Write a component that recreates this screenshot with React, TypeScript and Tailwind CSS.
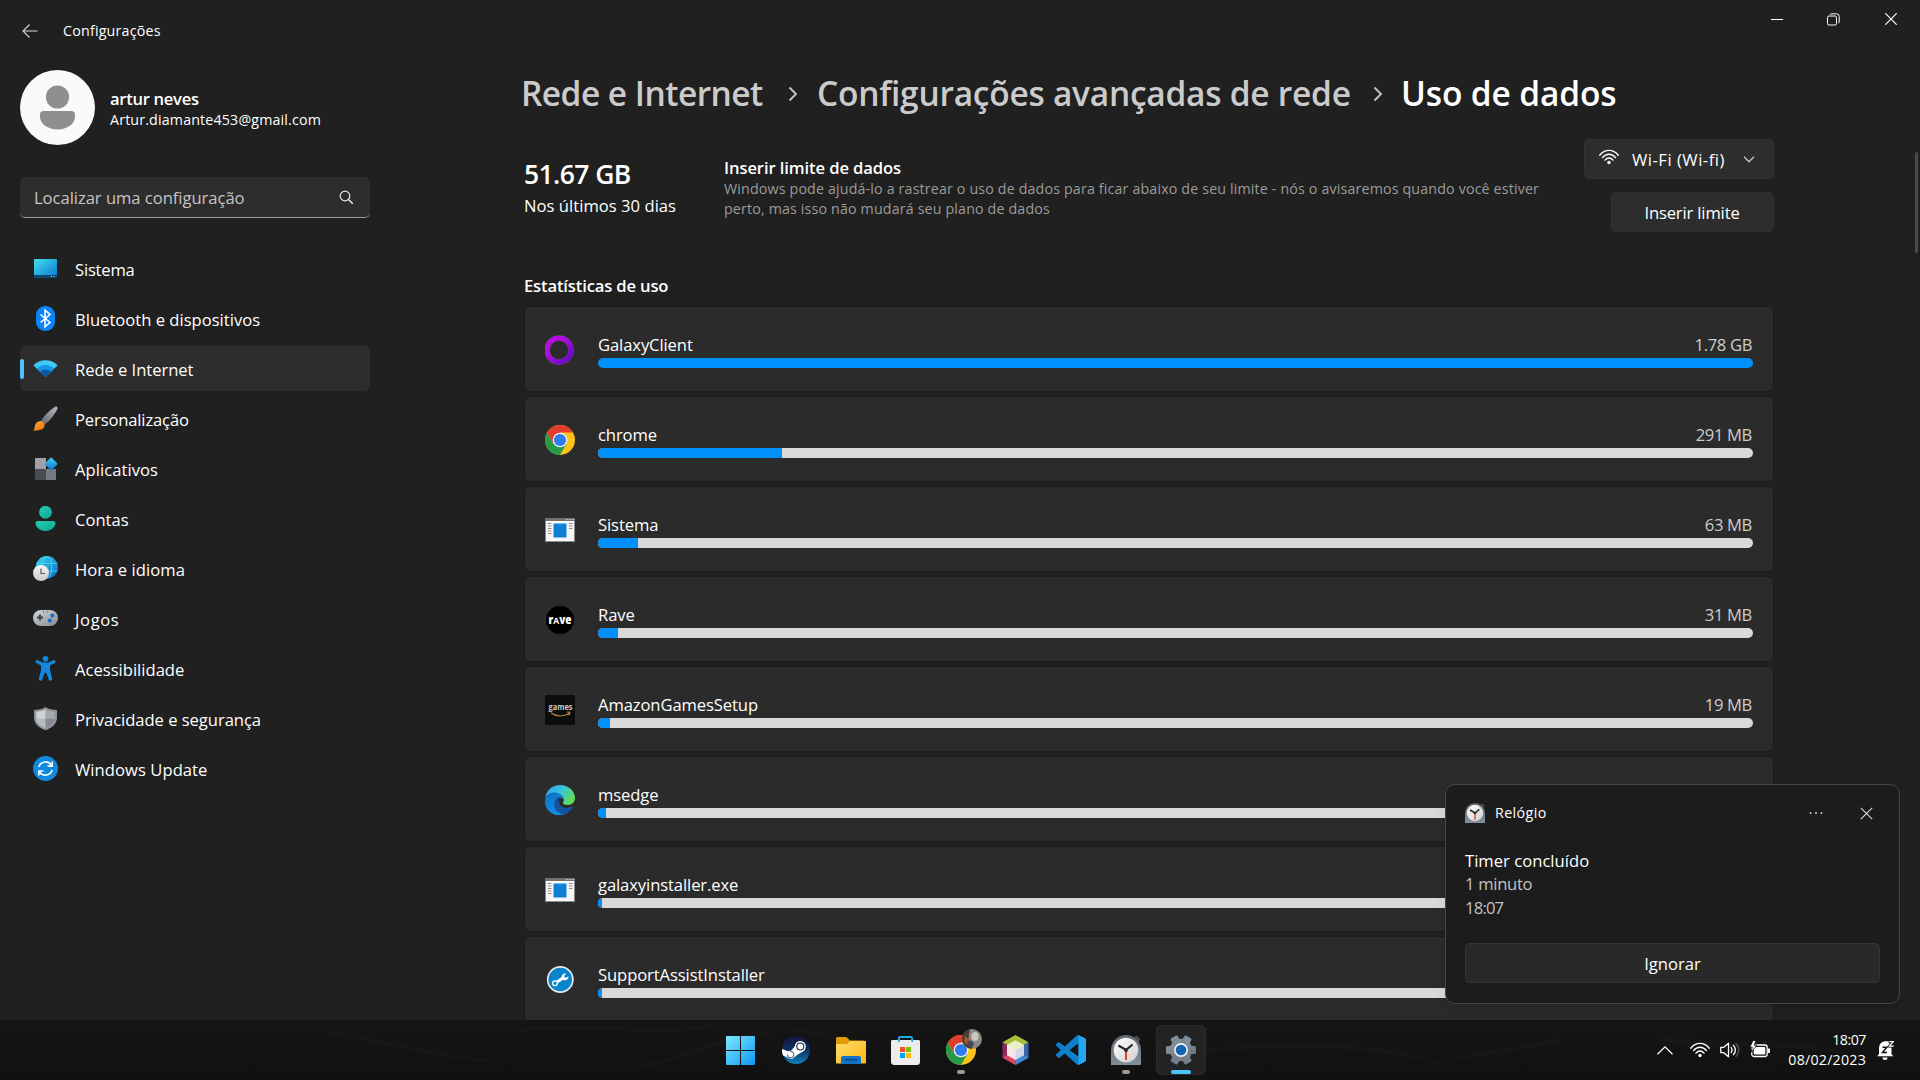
import type { ReactNode } from "react";

function MonitorIcon() {
  return (
    <svg width="25" height="25" viewBox="0 0 25 25">
      <defs>
        <linearGradient id="mon" x1="0" y1="0" x2="1" y2="1">
          <stop offset="0" stopColor="#3fe0ec" />
          <stop offset="1" stopColor="#0d76cf" />
        </linearGradient>
      </defs>
      <rect x="1" y="3" width="23" height="19" rx="1" fill="url(#mon)" />
      <path d="M1 19h23v2a1 1 0 0 1-1 1H2a1 1 0 0 1-1-1z" fill="#0b4a6e" />
      <path d="M18 20h1v1h-1zM20.500 20h1v1h-1z" fill="#9fe6f5" />
    </svg>
  );
}

function BluetoothIcon() {
  return (
    <svg width="25" height="25" viewBox="0 0 25 25">
      <rect x="3" y="0" width="19" height="25" rx="9" fill="#0a84fa" />
      <path d="M7.500 8.500l9.500 8-5 4.200V4.300l5 4.200-9.500 8" fill="none" stroke="#fff" strokeWidth="1.600" />
    </svg>
  );
}

function WifiColorIcon() {
  return (
    <svg width="25" height="25" viewBox="0 0 25 25">
      <path d="M.3 9.300A17.500 17.500 0 0 1 24.700 9.300L12.500 21z" fill="#3ccbf4" />
      <path d="M3.700 12.600a12.700 12.700 0 0 1 17.600 0L12.500 21z" fill="#1796e6" />
      <path d="M7 15.800a8 8 0 0 1 11 0L12.500 21z" fill="#0d57a8" />
    </svg>
  );
}

function BrushIcon() {
  return (
    <svg width="25" height="25" viewBox="0 0 25 25">
      <defs>
        <linearGradient id="bh" x1="1" y1="0" x2="0" y2="1">
          <stop offset="0" stopColor="#b5b9be" />
          <stop offset="1" stopColor="#5f656d" />
        </linearGradient>
        <linearGradient id="bt" x1="0" y1="0" x2="1" y2="1">
          <stop offset="0" stopColor="#ffb936" />
          <stop offset="1" stopColor="#f0630f" />
        </linearGradient>
      </defs>
      <path d="M22 .8c1.600-1 3.300.5 2.400 2.200-2.800 5.500-6.600 11-12.200 15.200l-4-3.800C12.300 8.800 16.500 4.200 22 .8z" fill="url(#bh)" />
      <path d="M6.200 15.200c2.900-1.200 6.200 1.700 5.300 5-.8 3.200-4.500 4.500-11.500 4.300 2.300-1.500 1.400-4.200 2.700-6.500.8-1.400 2-2.300 3.500-2.800z" fill="url(#bt)" />
    </svg>
  );
}

function AppsIcon() {
  return (
    <svg width="25" height="25" viewBox="0 0 25 25">
      <defs>
        <linearGradient id="ap" x1="0" y1="0" x2="1" y2="1">
          <stop offset="0" stopColor="#3fd0f8" />
          <stop offset="1" stopColor="#0a72d4" />
        </linearGradient>
      </defs>
      <path d="M3 2h10v11H2V3a1 1 0 0 1 1-1z" fill="#9da2a8" />
      <path d="M2 13h11v11H3a1 1 0 0 1-1-1z" fill="#484b4f" />
      <path d="M13 13h10v10a1 1 0 0 1-1 1h-9z" fill="#767b82" />
      <rect x="13.400" y="3.200" width="9.400" height="9.400" rx=".8" transform="rotate(45 18.100 7.900)" fill="url(#ap)" />
    </svg>
  );
}

function AccountIcon() {
  return (
    <svg width="25" height="25" viewBox="0 0 25 25">
      <defs>
        <linearGradient id="ac" x1="0" y1="0" x2="1" y2="1">
          <stop offset="0" stopColor="#22d0b0" />
          <stop offset="1" stopColor="#12a593" />
        </linearGradient>
      </defs>
      <circle cx="12.500" cy="6.300" r="6.400" fill="url(#ac)" />
      <path d="M4.700 15h15.600c1.200 0 2.200 1 2.200 2.100 0 4-4.200 7.900-10 7.900s-10-3.900-10-7.900c0-1.100 1-2.100 2.200-2.100z" fill="url(#ac)" />
    </svg>
  );
}

function TimeIcon() {
  return (
    <svg width="25" height="25" viewBox="0 0 25 25">
      <defs>
        <linearGradient id="gl" x1="0" y1="0" x2="1" y2="1">
          <stop offset="0" stopColor="#38dbe8" />
          <stop offset="1" stopColor="#0c68cc" />
        </linearGradient>
        <linearGradient id="gc" x1="0" y1="0" x2="0" y2="1">
          <stop offset="0" stopColor="#f6f6f6" />
          <stop offset="1" stopColor="#c9c9c9" />
        </linearGradient>
      </defs>
      <circle cx="13.800" cy="11.300" r="11.200" fill="url(#gl)" />
      <g fill="none" stroke="#4fe0f2" strokeOpacity=".7">
        <ellipse cx="13.800" cy="11.300" rx="5" ry="11" />
        <path d="M3.500 7.500h20.800M3.500 15h20.800" />
      </g>
      <circle cx="8" cy="17" r="8" fill="url(#gc)" />
      <path d="M8 12.500V17.500h4" fill="none" stroke="#55595e" strokeWidth="1.200" />
    </svg>
  );
}

function GameIcon() {
  return (
    <svg width="25" height="25" viewBox="0 0 25 25">
      <defs>
        <linearGradient id="gm" x1="0" y1="0" x2="0.800" y2="1">
          <stop offset="0" stopColor="#d3d7da" />
          <stop offset="1" stopColor="#8b9197" />
        </linearGradient>
      </defs>
      <rect y="4" width="25" height="16" rx="8" fill="url(#gm)" />
      <path d="M7 8.500v6M4 11.500h6" stroke="#3d4146" strokeWidth="1.800" />
      <circle cx="19.300" cy="9.500" r="2" fill="#0f6fd0" />
      <circle cx="16.800" cy="14.500" r="2" fill="#0f6fd0" />
      <path d="M10 5.200h1v1h-1zM14 5.200h1v1h-1z" fill="#444" />
    </svg>
  );
}

function AccessIcon() {
  return (
    <svg width="25" height="25" viewBox="0 0 25 25">
      <g fill="#1289dd">
        <circle cx="12.500" cy="2.800" r="2.800" />
        <path d="M4.600 4.200l5.400 2.300h5l5.400-2.300c2-.7 3 2 1.200 2.900L17 9.500v4.700l2.200 8.500c.4 2.100-2.600 3-3.400 1l-2.600-7h-1.400l-2.600 7c-.8 2-3.800 1.100-3.400-1L8 14.200V9.500L3.400 7.100c-1.800-.9-.8-3.600 1.200-2.900z" />
      </g>
    </svg>
  );
}

function ShieldIcon() {
  return (
    <svg width="25" height="25" viewBox="0 0 25 25">
      <path d="M12.500 1c3.500 2.300 7.200 2.900 11.500 3v7.500c0 6-4.500 10.200-11.500 12.700C5.500 21.700 1 17.500 1 11.500V4c4.300-.1 8-.7 11.500-3z" fill="#8f949a" />
      <path d="M12.500 3.300c2.900 1.600 5.900 2.300 9.300 2.500v5.700c0 4.800-3.300 8.200-9.300 10.500z" fill="#a4a9ae" />
      <path d="M12.500 3.300C9.600 4.900 6.600 5.600 3.200 5.800v5.700c0 4.800 3.300 8.200 9.300 10.500z" fill="#ced1d5" />
      <path d="M3.200 12.500h9.300V22c-6-2.300-9.100-5.200-9.300-9.500z" fill="#b7bbc0" />
      <path d="M12.500 12.500h9.300c-.2 4.300-3.300 7.200-9.300 9.500z" fill="#868b91" />
    </svg>
  );
}

function UpdateIcon() {
  return (
    <svg width="25" height="25" viewBox="0 0 25 25">
      <circle cx="12.500" cy="12.500" r="12.500" fill="#1189de" />
      <g fill="none" stroke="#fff" strokeWidth="1.600">
        <path d="M5.800 11A7 7 0 0 1 18.500 9.300M19.200 14A7 7 0 0 1 6.500 15.800" />
        <path d="M19.200 5.500v4.600h-4.600M5.800 19.500V15h4.600" />
      </g>
    </svg>
  );
}

function WifiIcon() {
  return (
    <svg width="20" height="16" viewBox="0 0 20 16" fill="none" stroke="#fff" strokeWidth="1.400" strokeLinecap="round">
      <path d="M.8 6.200C5.800-.2 14.200-.2 19.200 6.200" />
      <path d="M3.500 8.600c3.700-4.400 9.300-4.400 13 0" />
      <path d="M6 11.100c2.400-2.800 5.600-2.800 8 0" />
      <circle cx="10" cy="13.500" r="1.700" fill="#fff" stroke="none" />
    </svg>
  );
}

function GalaxyIcon() {
  return (
    <svg width="30" height="30" viewBox="0 0 30 30">
      <defs>
        <linearGradient id="gx" x1="0" y1="0" x2="1" y2="1">
          <stop offset="0" stopColor="#c808e0" />
          <stop offset=".35" stopColor="#b00ce6" />
          <stop offset="1" stopColor="#5c06c8" />
        </linearGradient>
      </defs>
      <circle cx="14" cy="15" r="12" fill="none" stroke="#7a3a8c" strokeWidth="5.500" />
      <circle cx="14" cy="15" r="12" fill="none" stroke="url(#gx)" strokeWidth="4.500" />
    </svg>
  );
}

function ChromeIcon() {
  return (
    <svg width="30" height="30" viewBox="-15 -15 30 30">
      <circle r="15" fill="#fcc31a" />
      <path d="M-13-7.500A15 15 0 0 0 0 15L6.500 3.750H-6.500z" fill="#279a48" />
      <path d="M-13-7.500A15 15 0 0 1 13-7.500H0L-6.500 3.750z" fill="#e33b2e" />
      <circle r="7.300" fill="#eef1f6" />
      <circle r="6.100" fill="#2f7cf0" />
    </svg>
  );
}

function ExeIcon() {
  return (
    <svg width="30" height="30" viewBox="0 0 30 30">
      <rect x=".5" y="3.500" width="29" height="23" fill="#f7f7f7" stroke="#8a8a88" />
      <path d="M0 3h30v3H0z" fill="#73716f" />
      <path d="M21 4.500h1.500M24 4.500h1.500M27 4.500h1.500" stroke="#d8d8d8" />
      <rect x="8.500" y="8.500" width="13" height="14" fill="#0f80d2" />
      <path d="M3 8.500h3.500M3 11h3.500M3 13.500h3.500M3 16h3.500M3 18.500h3.500M24 8.500h3.500M24 11h3.500M24 13.500h3.500" stroke="#8d8d8d" />
    </svg>
  );
}

function RaveIcon() {
  return (
    <svg width="30" height="30" viewBox="0 0 30 30">
      <circle cx="15" cy="15" r="14" fill="#000" />
      <text x="15" y="18.600" textAnchor="middle" textLength="23" lengthAdjust="spacingAndGlyphs" fontFamily="Open Sans, sans-serif" fontWeight="800" fontSize="11.500" fill="#fff">rᴀve</text>
    </svg>
  );
}

function AmazonIcon() {
  return (
    <svg width="30" height="30" viewBox="0 0 30 30">
      <rect width="30" height="30" rx="1.500" fill="#0b0d0d" />
      <text x="15.500" y="14.800" textAnchor="middle" textLength="24" lengthAdjust="spacingAndGlyphs" fontFamily="Open Sans, sans-serif" fontWeight="700" fontSize="9" fill="#c9c9c9">games</text>
      <path d="M6 17.800c5 4 12.500 4.200 18 .8M22 17l2.800.3-.7 2.800" fill="none" stroke="#b98b3a" strokeWidth="1.200" />
    </svg>
  );
}

function EdgeIcon() {
  return (
    <svg width="30" height="30" viewBox="0 0 30 30">
      <defs>
        <linearGradient id="e1" x1="0" y1="0.200" x2="1" y2="0.600">
          <stop offset="0" stopColor="#2fa8ee" />
          <stop offset=".5" stopColor="#35c5d8" />
          <stop offset="1" stopColor="#62dd50" />
        </linearGradient>
        <linearGradient id="e2" x1="0" y1="0" x2="0.300" y2="1">
          <stop offset="0" stopColor="#1170c4" />
          <stop offset="1" stopColor="#0c8fe6" />
        </linearGradient>
      </defs>
      <path d="M.2 13C1.300 5.200 7.400 0 15 0c8.300 0 15 6 15 12.800 0 4.200-3.200 7.200-7 7.200-3.200 0-5.200-1-5.200-2 0-.8 1-1.200 1-3.200C18.500 10.500 13 8 8.500 8 4.500 8 1.500 10 .2 13z" fill="url(#e1)" />
      <path d="M0 15C.8 10.500 4.200 7.600 8.700 7.600c5 0 9.700 2.600 10.100 7-2.500-3.400-8-2.200-8.800 2-1 5.400 3 11 8.600 13C8 32.500-.8 24.500 0 15z" fill="url(#e2)" />
      <path d="M13.500 12c-7 4-5.500 15.500 5 17.700 4-1.200 7-3.500 9.100-7 .5-.8-.2-1.300-1-.9-6.500 3-12.600-.3-12.900-5.300-.1-2 .3-3.300-.2-4.500z" fill="#1553a0" />
    </svg>
  );
}

function SupportIcon() {
  return (
    <svg width="30" height="30" viewBox="0 0 30 30">
      <circle cx="15.300" cy="14.500" r="12.600" fill="#0a84cc" stroke="#e4e8ea" strokeWidth="1.700" />
      <path d="M10.300 18.200l8.700-6" stroke="#fff" strokeWidth="3" />
      <circle cx="10" cy="18.200" r="2.400" fill="#0a84cc" stroke="#fff" strokeWidth="1.300" />
      <path d="M16.500 13c-.2-3 2-5 4.700-4.300l-2.200 2.300 1.800 2 2.700-1.700c.3 2.700-2.200 4.600-5 3.700z" fill="#fff" />
    </svg>
  );
}

function ClockIcon({ size }: { size: number }) {
  return (
    <svg width={size} height={size} viewBox="0 0 30 30">
      <defs>
        <linearGradient id={"ck" + size} x1="0" y1="0" x2="0" y2="1">
          <stop offset="0" stopColor="#5d666f" />
          <stop offset="1" stopColor="#82909c" />
        </linearGradient>
        <linearGradient id={"cf" + size} x1="0" y1="0" x2="1" y2="1">
          <stop offset="0" stopColor="#ffffff" />
          <stop offset="1" stopColor="#cfcfcf" />
        </linearGradient>
      </defs>
      <path d="M23 2.500l2.500-2.200 4 4-2 2.700z" fill="#4a4a4a" />
      <path d="M0 30V15a15 15 0 0 1 30 0v14a1 1 0 0 1-1 1z" fill={"url(#ck" + size + ")"} />
      <circle cx="15" cy="15" r="12.300" fill={"url(#cf" + size + ")"} />
      <path d="M15 15v10" stroke="#d8431a" strokeWidth="2" />
      <path d="M7.500 10.500L15 15l6.500-5.500" fill="none" stroke="#26292c" strokeWidth="2.200" />
      <circle cx="15" cy="15" r="2" fill="#26292c" />
    </svg>
  );
}

function StartIcon() {
  return (
    <svg width="29" height="29" viewBox="0 0 29 29">
      <defs>
        <linearGradient id="st" gradientUnits="userSpaceOnUse" x1="0" y1="0" x2="29" y2="29">
          <stop offset="0" stopColor="#7ceafd" />
          <stop offset="1" stopColor="#0f96f4" />
        </linearGradient>
      </defs>
      <path d="M0 1a1 1 0 0 1 1-1h13v14H0zM15 0h13a1 1 0 0 1 1 1v13H15zM0 15h14v14H1a1 1 0 0 1-1-1zM15 15h14v13a1 1 0 0 1-1 1H15z" fill="url(#st)" />
    </svg>
  );
}

function SteamIcon() {
  return (
    <svg width="28" height="28" viewBox="0 0 28 28">
      <defs>
        <linearGradient id="sm" x1="0" y1="0" x2="0" y2="1">
          <stop offset="0" stopColor="#12173c" />
          <stop offset=".5" stopColor="#0c2f63" />
          <stop offset="1" stopColor="#1283bd" />
        </linearGradient>
        <clipPath id="smc">
          <circle cx="14" cy="14" r="14" />
        </clipPath>
      </defs>
      <circle cx="14" cy="14" r="14" fill="url(#sm)" />
      <g clipPath="url(#smc)">
        <path d="M-1 12.500l9 3.500 5.500-6.500 9.500 4.500-8.500 5.500-4.500 3.500-11-4z" fill="#fff" />
        <circle cx="8.700" cy="18.700" r="3.900" fill="#fff" />
        <path d="M5.500 18.500a3.200 3.200 0 1 0 3-3" fill="none" stroke="#0f3c72" strokeWidth=".9" />
        <circle cx="18.300" cy="10.500" r="5.500" fill="#fff" />
        <circle cx="18.300" cy="10.500" r="3.500" fill="#fff" stroke="#0e2450" strokeWidth="1.100" />
      </g>
    </svg>
  );
}

function FolderIcon() {
  return (
    <svg width="30" height="27" viewBox="0 0 30 27">
      <defs>
        <linearGradient id="fo" x1="0" y1="0" x2="1" y2="1">
          <stop offset="0" stopColor="#ffdc6e" />
          <stop offset="1" stopColor="#fbb90f" />
        </linearGradient>
      </defs>
      <path d="M0 1.500C0 .7.700 0 1.500 0h8.300c.6 0 1 .3 1.500.7L14 3.500h14.500v6H0z" fill="#dd9a0b" />
      <path d="M0 7h11l3-3h15a1 1 0 0 1 1 1v20.500a1 1 0 0 1-1 1H1a1 1 0 0 1-1-1z" fill="url(#fo)" />
      <path d="M5 21a2 2 0 0 1 2-2h16a2 2 0 0 1 2 2v6H5z" fill="#1272c6" />
      <path d="M8.500 22.700h13" stroke="#0a3f7c" strokeWidth="1.200" />
    </svg>
  );
}

function StoreIcon() {
  return (
    <svg width="29" height="29" viewBox="0 0 29 29">
      <path d="M7.800 6V2.400c0-.9.500-1.400 1.400-1.400h10.600c.9 0 1.400.5 1.400 1.400V6" fill="none" stroke="#1eaef0" strokeWidth="1.800" />
      <path d="M0 5.500c0-.8.600-1.500 1.500-1.500h26c.9 0 1.500.7 1.500 1.500V26c0 1.600-1.200 3-3 3H3c-1.700 0-3-1.400-3-3z" fill="#ececec" />
      <path d="M7.800 6V3.500M21.200 6V3.500" stroke="#1eaef0" strokeWidth="1.800" />
      <path d="M9 11h5v5H9z" fill="#f25022" />
      <path d="M15 11h5v5h-5z" fill="#7fba00" />
      <path d="M9 17h5v5H9z" fill="#00a4ef" />
      <path d="M15 17h5v5h-5z" fill="#ffb900" />
    </svg>
  );
}

function NetbeansIcon() {
  return (
    <svg width="27" height="30" viewBox="0 0 27 30">
      <path d="M13.500 0L26.500 7.300 13.500 15 .5 7.300z" fill="#a9bf3c" />
      <path d="M.5 7.300L13.500 15v15L.5 22.700z" fill="#8f2a5c" />
      <path d="M.5 22.700L13.500 15v15z" fill="#dc4560" />
      <path d="M26.500 7.300L13.500 15v15l13-7.300z" fill="#3b62ac" />
      <path d="M26.500 22.700L13.500 15v15z" fill="#3f88d6" />
      <path d="M13.500 5.500L22 10.200v9.800l-8.500 4.800L5 20v-9.800z" fill="#f2f5ea" />
      <path d="M5 10.200l8.500 4.700v9.900L5 20z" fill="#f6e6e8" />
      <path d="M22 10.200l-8.500 4.700v9.900L22 20z" fill="#cfd8e4" />
      <path d="M13.500 5.500L22 10.200l-8.500 4.700L5 10.200z" fill="#e9f0c4" />
    </svg>
  );
}

function VsCodeIcon() {
  return (
    <svg width="30" height="30" viewBox="0 0 24 24">
      <path
        d="M23.150 2.587L18.210.210a1.494 1.494 0 0 0-1.705.290l-9.460 8.630-4.120-3.128a.999.999 0 0 0-1.276.057L.327 7.261A1 1 0 0 0 .326 8.740L3.899 12 .326 15.260a1 1 0 0 0 .001 1.479L1.650 17.940a.999.999 0 0 0 1.276.057l4.120-3.128 9.460 8.630a1.492 1.492 0 0 0 1.704.290l4.942-2.377A1.500 1.500 0 0 0 24 20.060V3.939a1.500 1.500 0 0 0-.850-1.352zm-5.146 14.861L10.826 12l7.178-5.448v10.896z"
        fill="#0f7fcb"
      />
      <path d="M18 .2l5.200 2.400c.5.300.8.800.8 1.400v16c0 .6-.3 1.100-.8 1.400L18 23.800z" fill="#27a5f2" />
    </svg>
  );
}

function GearIcon() {
  return (
    <svg width="30" height="30" viewBox="-15 -15 30 30">
      <defs>
        <linearGradient id="ge" gradientUnits="userSpaceOnUse" x1="-8" y1="-15" x2="8" y2="15">
          <stop offset="0" stopColor="#8d9aa4" />
          <stop offset="1" stopColor="#66717a" />
        </linearGradient>
      </defs>
      <g fill="url(#ge)">
        <circle r="11.300" />
        <rect x="-15" y="-4" width="30" height="8" rx="1.500" />
        <rect x="-15" y="-4" width="30" height="8" rx="1.500" transform="rotate(60)" />
        <rect x="-15" y="-4" width="30" height="8" rx="1.500" transform="rotate(120)" />
      </g>
      <circle r="7" fill="#f0f0f0" />
      <circle r="5.300" fill="#1263b4" />
    </svg>
  );
}

const nav: { label: string; cls: string; icon: ReactNode }[] = [
  { label: "Sistema", cls: "tracking-[-0.2px]", icon: <MonitorIcon /> },
  { label: "Bluetooth e dispositivos", cls: "tracking-[0px]", icon: <BluetoothIcon /> },
  { label: "Rede e Internet", cls: "tracking-[-0.05px]", icon: <WifiColorIcon /> },
  { label: "Personalização", cls: "tracking-[-0.15px]", icon: <BrushIcon /> },
  { label: "Aplicativos", cls: "tracking-[0.05px]", icon: <AppsIcon /> },
  { label: "Contas", cls: "tracking-[0px]", icon: <AccountIcon /> },
  { label: "Hora e idioma", cls: "tracking-[0.05px]", icon: <TimeIcon /> },
  { label: "Jogos", cls: "tracking-[0.6px]", icon: <GameIcon /> },
  { label: "Acessibilidade", cls: "tracking-[0px]", icon: <AccessIcon /> },
  { label: "Privacidade e segurança", cls: "tracking-[-0.05px]", icon: <ShieldIcon /> },
  { label: "Windows Update", cls: "tracking-[0.05px]", icon: <UpdateIcon /> },
];

const apps: { name: string; value: string; fill: number; icon: ReactNode }[] = [
  { name: "GalaxyClient", value: "1.78 GB", fill: 1155, icon: <GalaxyIcon /> },
  { name: "chrome", value: "291 MB", fill: 184, icon: <ChromeIcon /> },
  { name: "Sistema", value: "63 MB", fill: 40, icon: <ExeIcon /> },
  { name: "Rave", value: "31 MB", fill: 20, icon: <RaveIcon /> },
  { name: "AmazonGamesSetup", value: "19 MB", fill: 12, icon: <AmazonIcon /> },
  { name: "msedge", value: "13 MB", fill: 8, icon: <EdgeIcon /> },
  { name: "galaxyinstaller.exe", value: "5 MB", fill: 4, icon: <ExeIcon /> },
  { name: "SupportAssistInstaller", value: "4 MB", fill: 4, icon: <SupportIcon /> },
];

function TitleBar() {
  return (
    <header className="flex h-[62px] shrink-0 items-center">
      <svg className="ml-[22px]" width="16" height="14" viewBox="0 0 16 14" fill="none" stroke="#d8d8d8" strokeWidth="1.100">
        <path d="M7.500.5L1 7l6.500 6.500M1 7h14.500" />
      </svg>
      <h1 className="ml-[25px] text-[14.250px] leading-5 tracking-[0.200px]">Configurações</h1>
      <div className="mr-px ml-auto flex h-[38px] self-start">
        <button className="flex w-[57px] items-center justify-center">
          <svg width="12" height="12" viewBox="0 0 12 12"><path d="M0 6.500h12" stroke="#fff" /></svg>
        </button>
        <button className="flex w-[57px] items-center justify-center">
          <svg width="13" height="13" viewBox="0 0 13 13" fill="none" stroke="#fff">
            <rect x=".5" y="3" width="9" height="9" rx="1.500" />
            <path d="M3 1.500A1.500 1.500 0 0 1 4 .8h5.500a2.700 2.700 0 0 1 2.700 2.700V9a1.500 1.500 0 0 1-.8 1.200" />
          </svg>
        </button>
        <button className="flex w-[57px] items-center justify-center">
          <svg width="12" height="12" viewBox="0 0 12 12"><path d="M.3.3l11.400 11.400M11.700.3L.3 11.700" stroke="#fff" strokeWidth="1.200" /></svg>
        </button>
      </div>
    </header>
  );
}

function Sidebar() {
  return (
    <aside className="flex w-[390px] shrink-0 flex-col px-5 pt-2">
      <div className="flex items-center">
        <svg width="75" height="75" viewBox="0 0 75 75">
          <circle cx="37.500" cy="37.500" r="37.500" fill="#fafafa" />
          <circle cx="37.500" cy="27" r="11.600" fill="#8f8f8f" />
          <path d="M23.500 41h28c2 0 3.500 1.500 3.500 3.500v2C55 54 47 59.500 37.500 59.500S20 54 20 46.500v-2c0-2 1.500-3.500 3.500-3.500z" fill="#8f8f8f" />
        </svg>
        <div className="mt-[3px] ml-[15px]">
          <p className="text-[16.600px] leading-[22px] font-semibold tracking-[-0.300px]">artur neves</p>
          <p className="text-[14.250px] leading-5 tracking-[0.150px]">Artur.diamante453@gmail.com</p>
        </div>
      </div>
      <div className="mt-8 flex h-[41px] items-center justify-between rounded-[5px] border-b border-[#9a9a9a] bg-[#2d2d2d] pr-4 pl-[14px]">
        <span className="mt-[2px] text-[16.600px] leading-6 tracking-[-0.040px] text-[#c5c5c5]">Localizar uma configuração</span>
        <svg width="15" height="15" viewBox="0 0 15 15" fill="none" stroke="#e8e8e8" strokeWidth="1.200">
          <circle cx="6" cy="6" r="4.800" />
          <path d="M9.500 9.500l4.300 4.300" strokeWidth="1.500" />
        </svg>
      </div>
      <nav className="mt-7 flex flex-col gap-[5px]">
        {nav.map((n, i) => (
          <div key={n.label} className={i === 2 ? "flex h-[45px] items-center rounded-[5px] bg-[#2d2d2d]" : "flex h-[45px] items-center"}>
            <span className={i === 2 ? "h-5 w-1 rounded-full bg-[#4cc2ff]" : "w-1"} />
            <span className="ml-[9px] size-[25px]">{n.icon}</span>
            <span className={"mt-[3px] ml-[17px] text-[16.600px] leading-6 " + n.cls}>{n.label}</span>
          </div>
        ))}
      </nav>
    </aside>
  );
}

function Crumb() {
  return (
    <svg className="mt-[2px] shrink-0" width="10" height="16" viewBox="0 0 10 16" fill="none" stroke="#c4c4c4" strokeWidth="1.900">
      <path d="M1.500 1.500L8 8l-6.500 6.500" />
    </svg>
  );
}

function Content() {
  return (
    <main className="flex flex-1 flex-col pl-[131px]">
      <div className="flex h-12 items-center pt-[13px] text-[33.500px] leading-[48px] font-semibold whitespace-nowrap text-[#cbcbcb]">
        <span className="w-[267px] shrink-0 tracking-[-0.540px]">Rede e Internet</span>
        <Crumb />
        <span className="ml-[19px] w-[556px] shrink-0 tracking-[-0.260px]">Configurações avançadas de rede</span>
        <Crumb />
        <span className="ml-[18px] tracking-[-0.130px] text-white">Uso de dados</span>
      </div>
      <section className="mt-[29px] ml-[3px] flex h-[93px] w-[1250px]">
        <div className="w-[200px] shrink-0 pt-[18px]">
          <p className="text-[26.500px] leading-[34px] font-semibold tracking-[-0.600px]">51.67 GB</p>
          <p className="mt-[3px] text-[16.600px] leading-6 tracking-[0.030px]">Nos últimos 30 dias</p>
        </div>
        <div className="shrink-0 pt-[18px]">
          <p className="text-[16.600px] leading-[22px] font-semibold tracking-[-0.100px]">Inserir limite de dados</p>
          <p className="w-[840px] text-[14.250px] leading-5 tracking-[0.150px] text-[#9b9b9b]">
            Windows pode ajudá-lo a rastrear o uso de dados para ficar abaixo de seu limite - nós o avisaremos quando você estiver perto, mas isso não mudará seu plano de dados
          </p>
        </div>
        <div className="ml-auto flex flex-col items-end gap-[13px]">
          <button className="flex h-10 w-[190px] shrink-0 items-center rounded-[5px] border border-[#323232] bg-[#2d2d2d] pl-[14px]">
            <span className="-mt-1"><WifiIcon /></span>
            <span className="mt-px ml-[13px] text-[16.600px] leading-6 tracking-[0.500px] whitespace-nowrap">Wi-Fi (Wi-fi)</span>
            <svg className="ml-[18px]" width="12" height="7" viewBox="0 0 12 7" fill="none" stroke="#c9c9c9" strokeWidth="1.300">
              <path d="M1 .8l5 5 5-5" />
            </svg>
          </button>
          <button className="flex h-10 w-[163px] shrink-0 items-center justify-center rounded-[5px] border border-[#323232] bg-[#2d2d2d] pr-px pt-px text-[16.600px] leading-6 tracking-[-0.150px]">
            Inserir limite
          </button>
        </div>
      </section>
      <h2 className="mt-[42px] ml-[3px] text-[16.600px] leading-6 font-semibold tracking-[-0.150px]">Estatísticas de uso</h2>
      <ul className="mt-[8px] ml-[3px] flex flex-col gap-1">
        {apps.map((a) => (
          <li key={a.name} className="flex h-[86px] w-[1250px] shrink-0 rounded-md border border-[#1c1c1c] bg-[#2b2b2b] pr-5 pl-5">
            <span className="mt-[28px] size-[30px] shrink-0">{a.icon}</span>
            <div className="ml-[23px] flex-1 pt-[26px]">
              <div className="flex h-[25px] justify-between text-[16.600px] leading-6 tracking-[-0.100px]">
                <span>{a.name}</span>
                <span className="mr-px tracking-[-0.350px] text-[#cdcdcd]">{a.value}</span>
              </div>
              <div className="h-[10px] overflow-hidden rounded-[5px] bg-[#d9d9d9]">
                <div className="h-full bg-[#0090fb]" style={{ width: a.fill }} />
              </div>
            </div>
          </li>
        ))}
      </ul>
    </main>
  );
}

function Toast() {
  return (
    <section className="absolute top-[784px] left-[1445px] flex h-[220px] w-[455px] flex-col rounded-[10px] border border-[#464646] bg-[#1c1c1c] px-[19px] shadow-lg">
      <div className="mt-[18px] flex h-5 items-center">
        <ClockIcon size={20} />
        <span className="mt-[-1px] ml-[10px] text-[14.250px] leading-5 tracking-[0.400px]">Relógio</span>
        <svg className="ml-auto" width="14" height="4" viewBox="0 0 14 4" fill="#cfcfcf">
          <circle cx="1.500" cy="2" r="1" /><circle cx="7" cy="2" r="1" /><circle cx="12.500" cy="2" r="1" />
        </svg>
        <svg className="mr-[7px] ml-[37px]" width="13" height="13" viewBox="0 0 13 13"><path d="M.8.8l11.400 11.400M12.200.8L.8 12.200" stroke="#d5d5d5" strokeWidth="1.200" /></svg>
      </div>
      <div className="mt-[26px] text-[16.600px] leading-[23.300px] text-[#c3c3c3]">
        <p className="tracking-[0.020px] text-white">Timer concluído</p>
        <p className="tracking-[-0.300px]">1 minuto</p>
        <p className="tracking-[-0.800px]">18:07</p>
      </div>
      <button className="mt-[24px] flex h-10 items-center justify-center rounded-[5px] border border-[#363636] bg-[#292929] pt-[2px] text-[16.600px] leading-6">
        Ignorar
      </button>
    </section>
  );
}

function Slot({ children }: { children: ReactNode }) {
  return <div className="relative flex h-full w-[55px] shrink-0 items-center justify-center">{children}</div>;
}

function Taskbar() {
  return (
    <footer className="relative flex h-[60px] shrink-0 items-center bg-linear-to-b from-[#151515] to-[#111111]">
      <svg className="absolute inset-0" width="1920" height="60" viewBox="0 0 1920 60" fill="none" stroke="#fff" strokeOpacity=".014" strokeWidth="5">
        <path d="M330 12c60 10 110 26 170 30M520 10c60-8 130 6 190-4M640 46c50-8 70-26 130-34M790 10c30 2 50 8 70 12M1200 30c80-6 160-8 230 10M1430 44c50-12 90-14 130-24M1660 18c60 10 120 2 180 14" />
      </svg>
      <div className="relative ml-[713px] flex h-full">
        <Slot><StartIcon /></Slot>
        <Slot><SteamIcon /></Slot>
        <Slot><FolderIcon /></Slot>
        <Slot><StoreIcon /></Slot>
        <Slot>
          <ChromeIcon />
          <svg className="absolute top-[9px] left-[29px]" width="20" height="20" viewBox="0 0 20 20">
            <circle cx="10" cy="10" r="10" fill="#8b8781" />
            <path d="M0 10a10 10 0 0 1 8-9.800C7 5 6 9 7 13l3 7A10 10 0 0 1 0 10z" fill="#4a3a33" />
            <path d="M3 7l4 3-2 6-3-3z" fill="#a1542f" />
            <path d="M8 11l4 3-2 5-4-2z" fill="#3a4a60" />
            <ellipse cx="13" cy="7.500" rx="3.600" ry="4.500" fill="#c9c5bf" />
          </svg>
          <span className="absolute bottom-[6px] h-1 w-2 rounded-full bg-[#9a9a9a]" />
        </Slot>
        <Slot><NetbeansIcon /></Slot>
        <Slot><VsCodeIcon /></Slot>
        <Slot>
          <ClockIcon size={30} />
          <span className="absolute bottom-[6px] h-1 w-2 rounded-full bg-[#9a9a9a]" />
        </Slot>
        <Slot>
          <div className="relative flex size-[50px] items-center justify-center rounded-[5px] border border-[#2c2c2c] bg-[#232323]">
            <GearIcon />
            <span className="absolute bottom-0 h-1 w-5 rounded-full bg-[#4cc2ff]" />
          </div>
        </Slot>
      </div>
      <div className="relative ml-auto flex h-full items-center pr-[25px]">
        <svg width="16" height="9" viewBox="0 0 16 9" fill="none" stroke="#fff" strokeWidth="1.200"><path d="M.5 8.300L8 .9l7.500 7.400" /></svg>
        <span className="ml-[17px]"><WifiIcon /></span>
        <svg className="ml-[10px]" width="20" height="18" viewBox="0 0 20 18" fill="none" stroke="#fff" strokeWidth="1.300" strokeLinecap="round" strokeLinejoin="round">
          <path d="M.8 6.300h3L8.500 2.200v13.600L3.800 11.700h-3z" />
          <path d="M11.200 6.500c1 1.500 1 3.500 0 5M13.500 4.300c2.200 2.800 2.200 6.600 0 9.400" />
          <path d="M16 2.500c3.500 4 3.500 9 0 13" stroke="#555" />
        </svg>
        <svg className="-mt-[3px] ml-[10px]" width="20" height="18" viewBox="0 0 20 18">
          <rect x="1.700" y="5" width="15.500" height="11.500" rx="2.500" fill="none" stroke="#fff" strokeWidth="1.300" />
          <rect x="3.700" y="7" width="11.600" height="7.500" rx="1" fill="#fff" />
          <path d="M18 8.500h1.200c.5 0 .8.400.8.800v2.900c0 .5-.3.800-.8.800H18z" fill="#fff" />
          <path d="M3 .5L-.2 7.200h2.400L1 12.500l6-7.300H4.300L6 .5z" fill="#fff" stroke="#121212" strokeWidth=".9" />
        </svg>
        <div className="ml-[18px] w-[78px] text-right text-[14.250px] leading-5">
          <p className="tracking-[-0.500px]">18:07</p>
          <p className="tracking-[0.200px]">08/02/2023</p>
        </div>
        <svg className="ml-[11px]" width="18" height="20" viewBox="0 0 18 20">
          <path d="M2 8a6.300 6.300 0 0 1 6.500-6.700h3.200v2.200H14.500V8v6l1.700 2.200H.2L2 14z" fill="#fff" />
          <path d="M5.500 17.500h5a2.500 2.500 0 0 1-5 0z" fill="#fff" />
          <path d="M5.500 7.200h4.200l-4.200 5.300h4.500" fill="none" stroke="#111" strokeWidth="1.500" />
          <path d="M12.200 1.300h4.300l-4.200 5h4.500" fill="none" stroke="#111" strokeWidth="2.600" />
          <path d="M12.500 1.600h3.800l-3.800 4.600h4.200" fill="none" stroke="#fff" strokeWidth="1.200" />
        </svg>
      </div>
    </footer>
  );
}

export default function App() {
  return (
    <div className="relative flex h-[1080px] w-[1920px] flex-col overflow-hidden bg-[#202020] font-['Open_Sans',sans-serif] text-white">
      <div className="flex h-[1020px] shrink-0 flex-col overflow-hidden">
        <TitleBar />
        <div className="flex min-h-0 flex-1">
          <Sidebar />
          <Content />
          <div className="mt-[90px] mr-[2px] h-[101px] w-[3px] shrink-0 rounded-full bg-[#4a4a4a]" />
        </div>
      </div>
      <Taskbar />
      <Toast />
    </div>
  );
}
